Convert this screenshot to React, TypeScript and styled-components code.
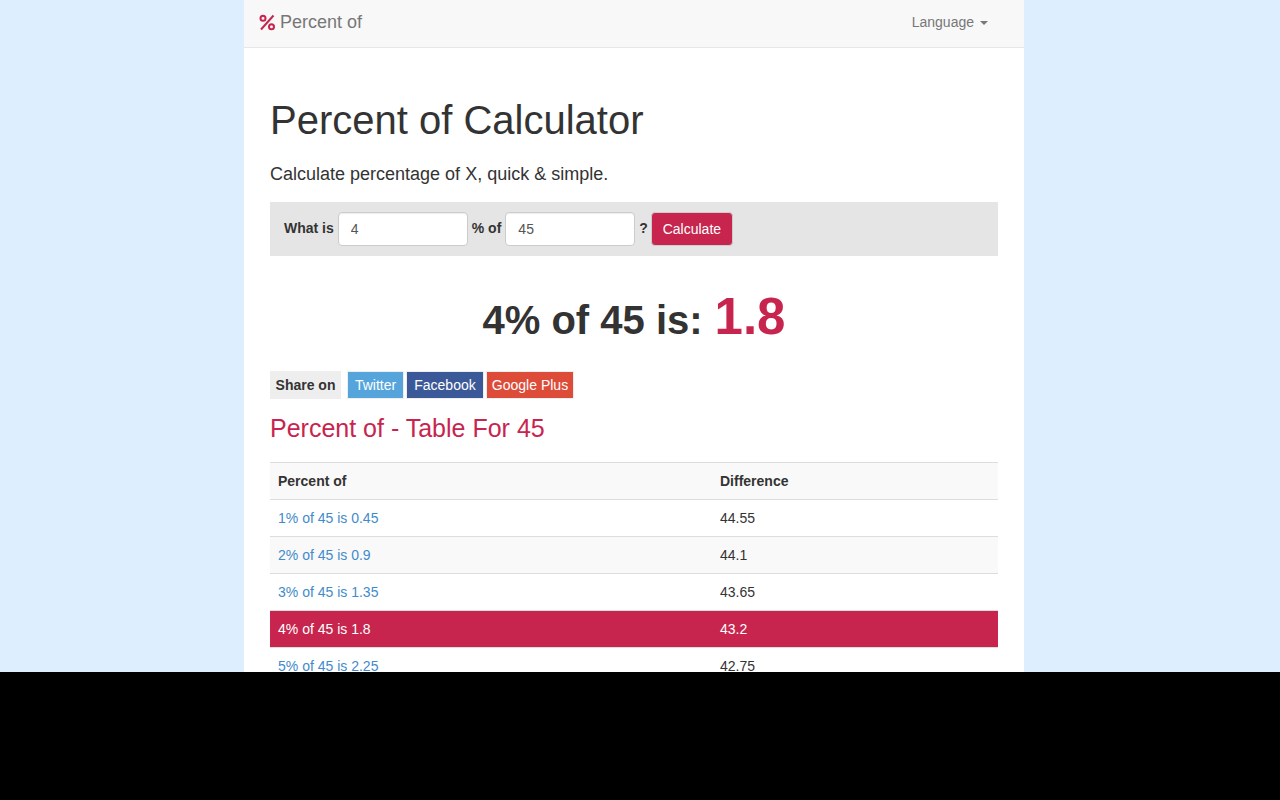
import React from "react";
import styled, { createGlobalStyle } from "styled-components";

const CRIMSON = "#c7254e";

const GlobalStyle = createGlobalStyle`
  html, body {
    margin: 0;
    padding: 0;
    height: 100%;
    overflow: hidden;
    background: #000;
  }
  * {
    box-sizing: border-box;
  }
  body {
    font-family: "Liberation Sans", Arial, sans-serif;
    font-size: 14px;
    line-height: 1.42857;
    color: #333;
  }
`;

const Viewport = styled.div`
  height: 672px;
  overflow: hidden;
  background: #ddeeff;
`;

const Page = styled.div`
  width: 780px;
  margin-left: 244px;
  min-height: 672px;
  background: #fff;
`;

const Navbar = styled.nav`
  display: flex;
  align-items: center;
  justify-content: space-between;
  height: 48px;
  padding: 0 36px 2px 15px;
  background: #f8f8f8;
  border-bottom: 1px solid #e7e7e7;
`;

const Brand = styled.a`
  display: flex;
  align-items: center;
  gap: 4px;
  font-size: 18px;
  color: #777;
`;

const LanguageToggle = styled.a`
  display: flex;
  align-items: center;
  gap: 6px;
  color: #777;
`;

const Caret = styled.span`
  width: 0;
  height: 0;
  margin-top: 2px;
  border-top: 4px solid #777;
  border-left: 4px solid transparent;
  border-right: 4px solid transparent;
`;

const Content = styled.main`
  padding: 0 26px;
`;

const Title = styled.h1`
  margin: 46px 0 0;
  font-size: 40px;
  font-weight: 400;
  line-height: 52px;
  color: #333;
`;

const Lead = styled.p`
  margin: 15px 0 0;
  font-size: 18px;
  line-height: 26px;
`;

const CalcForm = styled.form`
  display: flex;
  align-items: center;
  gap: 4px;
  height: 54px;
  margin-top: 15px;
  padding: 0 14px;
  background: #e5e5e5;
`;

const FieldLabel = styled.label`
  font-weight: 700;
`;

const NumberInput = styled.input`
  width: 130px;
  height: 34px;
  padding: 6px 12px;
  font: inherit;
  color: #555;
  background: #fff;
  border: 1px solid #ccc;
  border-radius: 4px;
  box-shadow: inset 0 1px 1px rgba(0, 0, 0, 0.075);
`;

const CalcButton = styled.button`
  width: 82px;
  height: 34px;
  margin-left: -1px;
  padding: 7px 0 5px;
  font: inherit;
  color: #fff;
  background: ${CRIMSON};
  border: 1px solid #ccc;
  border-radius: 4px;
`;

const Result = styled.h2`
  display: flex;
  align-items: baseline;
  justify-content: center;
  gap: 12px;
  height: 62px;
  margin: 30px 0 0;
  font-size: 40px;
  font-weight: 700;
  line-height: 62px;
`;

const ResultValue = styled.span`
  font-size: 51px;
  color: ${CRIMSON};
`;

const ShareRow = styled.div`
  display: flex;
  align-items: center;
  height: 28px;
  margin-top: 23px;
`;

const ShareLabel = styled.span`
  display: flex;
  align-items: center;
  justify-content: center;
  width: 71px;
  height: 28px;
  margin-right: 6px;
  padding-top: 2px;
  font-weight: 700;
  background: #eee;
`;

const ShareButton = styled.a<{ $bg: string; $width: number }>`
  display: flex;
  align-items: center;
  justify-content: center;
  width: ${(props) => props.$width}px;
  height: 28px;
  margin-right: 2px;
  padding-top: 1px;
  color: #fff;
  background: ${(props) => props.$bg};
  border: 1px solid #eee;
`;

const SectionTitle = styled.h3`
  margin: 14px 0 0;
  font-size: 25px;
  font-weight: 400;
  line-height: 30px;
  color: ${CRIMSON};
`;

const Table = styled.table`
  width: 100%;
  margin-top: 19px;
  border-collapse: collapse;
  table-layout: fixed;
`;

const HeadCell = styled.th`
  height: 37px;
  padding: 2px 8px 0;
  text-align: left;
  font-weight: 700;
  background: #f9f9f9;
  border-top: 1px solid #ddd;
  border-bottom: 1px solid #ddd;
`;

const Row = styled.tr<{ $active?: boolean; $striped?: boolean }>`
  color: ${(props) => (props.$active ? "#fff" : "#333")};
  background: ${(props) =>
    props.$active ? CRIMSON : props.$striped ? "#f9f9f9" : "#fff"};
`;

const Cell = styled.td`
  height: 37px;
  padding: 2px 8px 0;
  border-bottom: 1px solid #ddd;
`;

const RowLink = styled.a<{ $active?: boolean }>`
  color: ${(props) => (props.$active ? "#fff" : "#428bca")};
`;

const Band = styled.div`
  height: 128px;
  background: #000;
`;

const PercentIcon = () => (
  <svg width="17" height="17" viewBox="0 0 17 17" fill="none" stroke={CRIMSON} strokeWidth="2">
    <line x1="14.5" y1="1.5" x2="2" y2="15.5" />
    <circle cx="4" cy="4.3" r="2.5" />
    <circle cx="12.5" cy="12.7" r="2.5" />
  </svg>
);

const rows = [
  { percent: 1, value: "0.45", diff: "44.55" },
  { percent: 2, value: "0.9", diff: "44.1" },
  { percent: 3, value: "1.35", diff: "43.65" },
  { percent: 4, value: "1.8", diff: "43.2" },
  { percent: 5, value: "2.25", diff: "42.75" },
];

const App: React.FC = () => {
  return (
    <>
      <GlobalStyle />
      <Viewport>
        <Page>
          <Navbar>
            <Brand>
              <PercentIcon />
              Percent of
            </Brand>
            <LanguageToggle>
              Language
              <Caret />
            </LanguageToggle>
          </Navbar>
          <Content>
            <Title>Percent of Calculator</Title>
            <Lead>Calculate percentage of X, quick &amp; simple.</Lead>
            <CalcForm>
              <FieldLabel>What is</FieldLabel>
              <NumberInput defaultValue="4" />
              <FieldLabel>% of</FieldLabel>
              <NumberInput defaultValue="45" />
              <FieldLabel>?</FieldLabel>
              <CalcButton type="button">Calculate</CalcButton>
            </CalcForm>
            <Result>
              <span>4% of 45 is:</span>
              <ResultValue>1.8</ResultValue>
            </Result>
            <ShareRow>
              <ShareLabel>Share on</ShareLabel>
              <ShareButton $bg="#55a5dc" $width={57}>Twitter</ShareButton>
              <ShareButton $bg="#3b5998" $width={78}>Facebook</ShareButton>
              <ShareButton $bg="#dd4b39" $width={88}>Google Plus</ShareButton>
            </ShareRow>
            <SectionTitle>Percent of - Table For 45</SectionTitle>
            <Table>
              <colgroup>
                <col width="442" />
                <col />
              </colgroup>
              <thead>
                <tr>
                  <HeadCell>Percent of</HeadCell>
                  <HeadCell>Difference</HeadCell>
                </tr>
              </thead>
              <tbody>
                {rows.map((row, i) => {
                  const active = row.percent === 4;
                  return (
                    <Row key={row.percent} $active={active} $striped={i % 2 === 1}>
                      <Cell>
                        <RowLink $active={active}>
                          {row.percent}% of 45 is {row.value}
                        </RowLink>
                      </Cell>
                      <Cell>{row.diff}</Cell>
                    </Row>
                  );
                })}
              </tbody>
            </Table>
          </Content>
        </Page>
      </Viewport>
      <Band />
    </>
  );
};

export default App;
